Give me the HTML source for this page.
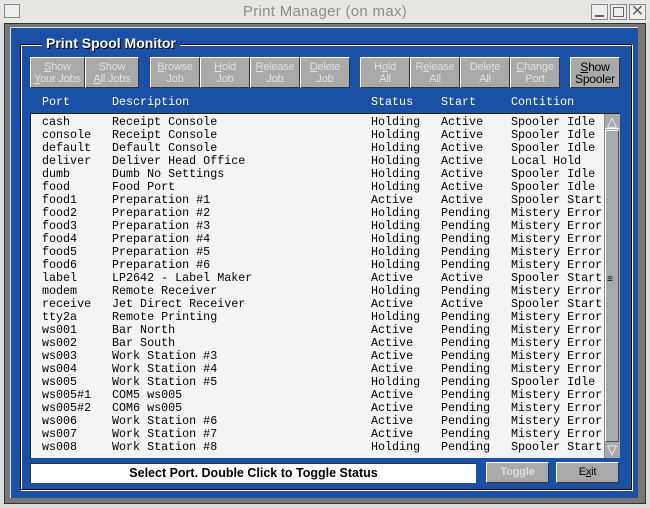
<!DOCTYPE html>
<html><head><meta charset="utf-8"><style>
*{margin:0;padding:0;box-sizing:border-box}
body{width:650px;height:508px;background:#dcdcd8;position:relative;overflow:hidden;font-family:"Liberation Sans",sans-serif}
.a{position:absolute}
.title{left:0;top:0;width:650px;height:23px;background:#e6e6e2;color:#8c8c8c;font-size:15px;text-align:center;line-height:23px;letter-spacing:0.3px}
.btn{position:absolute;top:57px;height:31px;background:#a9a9a9;border-top:1px solid #fff;border-left:1px solid #fff;border-right:1px solid #333;border-bottom:1px solid #333;color:#e2e2e2;font-size:11px;line-height:12px;text-align:center;padding-top:3px;letter-spacing:-0.2px}
.on{color:#000}
.hd{position:absolute;top:95px;color:#fff;font-family:"Liberation Mono",monospace;font-size:11.7px}
.list{left:30px;top:113px;width:590px;height:345px;background:#f4f4f4;border-top:1px solid #222;border-left:1px solid #222}
pre{position:absolute;top:2px;font-family:"Liberation Mono",monospace;font-size:11.7px;line-height:13px;color:#000}
</style></head><body>
<div class="a title">Print Manager (on max)</div>
<div class="a" style="left:4px;top:4px;width:16px;height:14px;border:1px solid #888;background:#eee"></div>
<div class="a" style="left:591px;top:4px;width:17px;height:16px;border:1px solid #888;background:#eee"><div class="a" style="left:3px;top:10px;width:9px;height:2px;background:#666"></div></div>
<div class="a" style="left:610px;top:4px;width:17px;height:16px;border:1px solid #888;background:#eee"><div class="a" style="left:2px;top:2px;width:11px;height:10px;border:1px solid #666"></div></div>
<div class="a" style="left:629px;top:4px;width:17px;height:16px;border:1px solid #888;background:#eee;color:#666;font-size:16px;line-height:14px;text-align:center">✕</div>
<div class="a" style="left:4px;top:23px;width:642px;height:481px;background:#777;border:1px solid #333"></div>
<div class="a" style="left:10px;top:27px;width:628px;height:471px;background:#1a50a6;border-top:1px solid #ddd;border-left:1px solid #ddd"></div>
<div class="a" style="left:20px;top:44px;width:612px;height:446px;border:1px solid #000;box-shadow:inset 1px 1px 0 #fff, 1px 1px 0 #fff"></div>
<div class="a" style="left:42px;top:35px;padding:0 4px;background:#1a50a6;color:#fff;font-weight:bold;font-size:14px;text-shadow:1px 1px 0 #000">Print Spool Monitor</div>
<div class="btn" style="left:30px;width:55px"><u>S</u>how<br><u>Y</u>our Jobs</div>
<div class="btn" style="left:85px;width:54px">Show<br><u>A</u>ll Jobs</div>
<div class="btn" style="left:150px;width:50px"><u>B</u>rowse<br>Job</div>
<div class="btn" style="left:200px;width:50px"><u>H</u>old<br>Job</div>
<div class="btn" style="left:250px;width:50px"><u>R</u>elease<br>Job</div>
<div class="btn" style="left:300px;width:50px"><u>D</u>elete<br>Job</div>
<div class="btn" style="left:360px;width:50px">H<u>o</u>ld<br>All</div>
<div class="btn" style="left:410px;width:50px">R<u>e</u>lease<br>All</div>
<div class="btn" style="left:460px;width:50px">Dele<u>t</u>e<br>All</div>
<div class="btn" style="left:510px;width:50px"><u>C</u>hange<br>Port</div>
<div class="btn on" style="left:570px;width:50px;font-size:12px"><u>S</u>how<br>Spooler</div>
<div class="hd" style="left:42px">Port</div>
<div class="hd" style="left:112px">Description</div>
<div class="hd" style="left:371px">Status</div>
<div class="hd" style="left:441px">Start</div>
<div class="hd" style="left:511px">Contition</div>
<div class="a list">
<pre style="left:11px">cash
console
default
deliver
dumb
food
food1
food2
food3
food4
food5
food6
label
modem
receive
tty2a
ws001
ws002
ws003
ws004
ws005
ws005#1
ws005#2
ws006
ws007
ws008</pre>
<pre style="left:81px">Receipt Console
Receipt Console
Default Console
Deliver Head Office
Dumb No Settings
Food Port
Preparation #1
Preparation #2
Preparation #3
Preparation #4
Preparation #5
Preparation #6
LP2642 - Label Maker
Remote Receiver
Jet Direct Receiver
Remote Printing
Bar North
Bar South
Work Station #3
Work Station #4
Work Station #5
COM5 ws005
COM6 ws005
Work Station #6
Work Station #7
Work Station #8</pre>
<pre style="left:340px">Holding
Holding
Holding
Holding
Holding
Holding
Active
Holding
Holding
Holding
Holding
Holding
Active
Holding
Active
Holding
Active
Active
Active
Active
Holding
Active
Active
Active
Active
Holding</pre>
<pre style="left:410px">Active
Active
Active
Active
Active
Active
Active
Pending
Pending
Pending
Pending
Pending
Active
Pending
Active
Pending
Pending
Pending
Pending
Pending
Pending
Pending
Pending
Pending
Pending
Pending</pre>
<pre style="left:480px">Spooler Idle
Spooler Idle
Spooler Idle
Local Hold
Spooler Idle
Spooler Idle
Spooler Start
Mistery Error
Mistery Error
Mistery Error
Mistery Error
Mistery Error
Spooler Start
Mistery Error
Spooler Start
Mistery Error
Mistery Error
Mistery Error
Mistery Error
Mistery Error
Spooler Idle
Mistery Error
Mistery Error
Mistery Error
Mistery Error
Spooler Start</pre>
<div class="a" style="left:573px;top:0;width:16px;height:344px;background:#a9a9a9;border-left:1px solid #888"></div>
<div class="a" style="left:574px;top:1px;width:14px;height:14px;border-bottom:1px solid #fff;color:#fff;font-size:13px;line-height:13px;text-align:center">△</div>
<div class="a" style="left:574px;top:16px;width:14px;height:312px;border:1px solid #fff;border-right-color:#555;border-bottom-color:#555"></div>
<div class="a" style="left:576px;top:164px;width:10px;font-size:10px;line-height:4px;color:#000">≡</div>
<div class="a" style="left:574px;top:329px;width:14px;height:14px;color:#fff;font-size:13px;line-height:14px;text-align:center">▽</div>
</div>
<div class="a" style="left:30px;top:463px;width:446px;height:20px;background:#fff;border-top:1px solid #333;border-left:1px solid #333;font-size:12.5px;font-weight:bold;text-align:center;line-height:19px">Select Port. Double Click to Toggle Status</div>
<div class="btn" style="left:486px;top:462px;width:63px;height:21px;padding-top:3px;font-weight:bold;font-size:11px;color:#ddd">Toggle</div>
<div class="btn on" style="left:556px;top:462px;width:63px;height:21px;padding-top:3px;font-size:11px">E<u>x</u>it</div>
</body></html>
